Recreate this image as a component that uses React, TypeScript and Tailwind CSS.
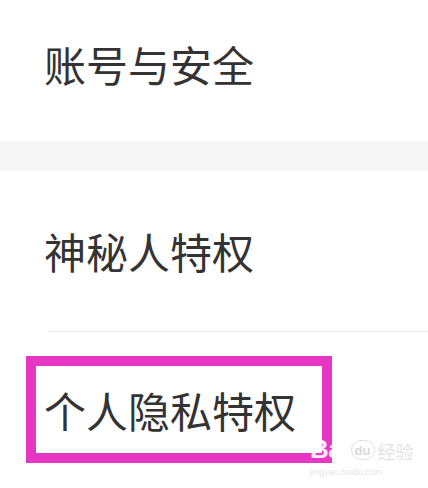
const font = { fontFamily: '"Noto Sans CJK SC", "Noto Sans", sans-serif' };

const Watermark = () => (
  <div className="absolute left-[310px] top-[436px] flex flex-col items-start leading-none">
    <div className="flex items-end">
      <span className="text-[26px] font-bold text-white/90 tracking-tight" style={{ fontFamily: '"Liberation Sans", sans-serif' }}>
        Bai
      </span>
      <span className="relative ml-[2px] mb-[2px] flex h-[20px] w-[24px] items-center justify-center rounded-full border border-[#e2e2e2] text-[13px] font-bold text-[#d8d8d8]" style={{ fontFamily: '"Liberation Sans", sans-serif' }}>
        du
      </span>
      <span className="ml-[3px] mb-[2px] text-[18px] text-[#e4e4e4]" style={font}>
        经验
      </span>
    </div>
    <span className="mt-[6px] text-[9px] text-[#e6e6e6]" style={{ fontFamily: '"Liberation Sans", sans-serif' }}>
      jingyan.baidu.com
    </span>
  </div>
);

export default function App() {
  return (
    <div className="relative h-[488px] w-[428px] overflow-hidden bg-white text-[#333333]" style={font}>
      <div className="flex h-[141px] items-center pb-[14px] pl-[44px] text-[42px] leading-none">
        账号与安全
      </div>
      <div className="h-[30px] bg-[#f6f6f6]" />
      <div className="flex h-[160px] items-center pl-[44px] text-[42px] leading-none">
        神秘人特权
      </div>
      <div className="ml-[48px] h-px bg-[#e8e8e8]" />
      <div className="pl-[26px] pt-[24px]">
        <div className="flex h-[107px] w-[306px] items-center border-[10px] border-[#e536c4] pl-[8px] text-[42px] leading-none">
          个人隐私特权
        </div>
      </div>
      <Watermark />
    </div>
  );
}
